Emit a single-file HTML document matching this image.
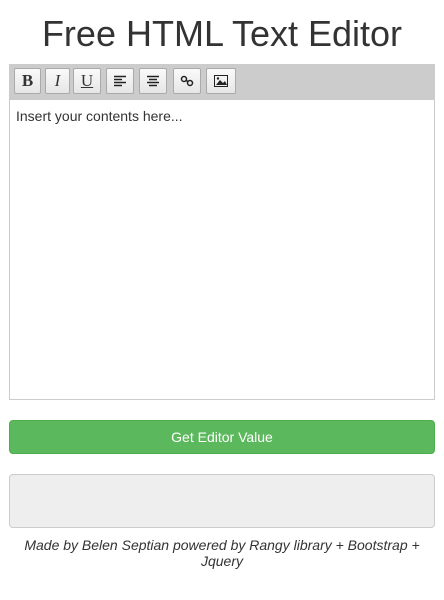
<!DOCTYPE html>
<html><head><style>
body{margin:0;width:444px;height:600px;background:#fff;font-family:"Liberation Sans",Arial,sans-serif;color:#333;overflow:hidden}
h1{margin:0;position:absolute;top:14px;left:0;width:444px;text-align:center;font-size:36px;font-weight:500;line-height:40px;color:#333}
.tb{position:absolute;left:9px;top:64px;width:426px;height:36px;background:#ccc}
.b{position:absolute;top:4px;height:26px;background:linear-gradient(#fafafa,#e6e6e6);border:1px solid #aaa;box-sizing:border-box;border-radius:2px;display:flex;align-items:center;justify-content:center;font-family:"Liberation Serif",serif;font-size:17px;color:#333}
.ed{position:absolute;left:9px;top:100px;width:426px;height:300px;border:1px solid #ccc;border-top:none;box-sizing:border-box;font-size:14px;padding:8px 6px}
.btn{position:absolute;left:9px;top:420px;width:426px;height:34px;background:#5cb85c;border:1px solid #4cae4c;box-sizing:border-box;border-radius:4px;color:#fff;font-size:14px;text-align:center;line-height:32px}
.ta{position:absolute;left:9px;top:474px;width:426px;height:54px;background:#eee;border:1px solid #ccc;box-sizing:border-box;border-radius:4px}
.ft{position:absolute;left:20px;width:404px;top:537px;text-align:center;font-style:italic;font-size:14px;line-height:16px;color:#333}
</style></head><body>
<h1>Free HTML Text Editor</h1>
<div class="tb">
<div class="b" style="left:5px;width:27px;font-weight:bold">B</div>
<div class="b" style="left:36px;width:25px;font-style:italic">I</div>
<div class="b" style="left:64px;width:28px;text-decoration:underline">U</div>
<div class="b" style="left:97px;width:28px"><svg width="14" height="12"><path d="M1 1.5h12M1 4.5h8M1 7.5h12M1 10.5h8" stroke="#222" stroke-width="1.5"/></svg></div>
<div class="b" style="left:130px;width:28px"><svg width="14" height="12"><path d="M1 1.5h12M3 4.5h8M1 7.5h12M3 10.5h8" stroke="#222" stroke-width="1.5"/></svg></div>
<div class="b" style="left:164px;width:28px"><svg width="14" height="12"><circle cx="4" cy="4" r="2.5" fill="none" stroke="#222" stroke-width="1.5"/><circle cx="10" cy="8" r="2.5" fill="none" stroke="#222" stroke-width="1.5"/><path d="M5.5 5.5l3 1" stroke="#222" stroke-width="1.5"/></svg></div>
<div class="b" style="left:197px;width:30px"><svg width="14" height="12"><rect x="0.5" y="0.5" width="13" height="11" fill="none" stroke="#222"/><path d="M2 10l4-5 3 3 2-2 2 4z" fill="#222"/><circle cx="4" cy="3.5" r="1.2" fill="#222"/></svg></div>
</div>
<div class="ed">Insert your contents here...</div>
<div class="btn">Get Editor Value</div>
<div class="ta"></div>
<div class="ft">Made by Belen Septian powered by Rangy library + Bootstrap + Jquery</div>
</body></html>
